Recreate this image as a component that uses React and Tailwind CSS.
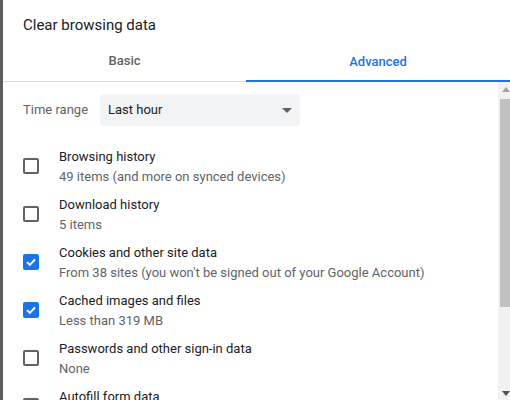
import React from "react";

const items = [
  { title: "Browsing history", sub: "49 items (and more on synced devices)", checked: false },
  { title: "Download history", sub: "5 items", checked: false },
  { title: "Cookies and other site data", sub: "From 38 sites (you won't be signed out of your Google Account)", checked: true },
  { title: "Cached images and files", sub: "Less than 319 MB", checked: true },
  { title: "Passwords and other sign-in data", sub: "None", checked: false },
  { title: "Autofill form data", sub: "", checked: false },
];

function Checkbox({ checked }) {
  if (checked) {
    return (
      <div className="w-4 h-4 rounded-[2px] bg-[#1a73e8] flex items-center justify-center shrink-0">
        <svg width="12" height="12" viewBox="0 0 12 12">
          <path d="M2 6.2 L4.8 9 L10 3.5" fill="none" stroke="white" strokeWidth="1.9" />
        </svg>
      </div>
    );
  }
  return <div className="w-4 h-4 rounded-[2px] border-2 border-[#5f6368] shrink-0" />;
}

export default function App() {
  return (
    <div className="w-[510px] h-[400px] flex overflow-hidden bg-white" style={{ fontFamily: "Roboto, 'Noto Sans', sans-serif" }}>
      <div className="w-[3px] h-full bg-[#5c5c5c] shrink-0" />
      <div className="flex-1 flex flex-col bg-white min-w-0">
        <div className="h-[40px] pl-[20px] pt-[15px] text-[15px] leading-[20px] text-[#202124] shrink-0">Clear browsing data</div>
        <div className="flex h-[42px] border-b border-[#dadce0] shrink-0">
          <div className="w-[243px] flex items-center justify-center text-[13px] font-medium text-[#5f6368] pt-[1px]">Basic</div>
          <div className="flex-1 flex items-center justify-center text-[13px] font-medium text-[#1a73e8] border-b-2 border-[#1a73e8] mb-[-1px] pt-[3px]">Advanced</div>
        </div>
        <div className="flex flex-1 min-h-0">
          <div className="flex-1 pl-[20px] pt-[12px] overflow-hidden">
            <div className="flex items-center h-[32px]">
              <span className="text-[13px] text-[#5f6368] w-[77px]">Time range</span>
              <div className="w-[200px] h-[32px] rounded-[4px] bg-[#f1f3f4] flex items-center justify-between pl-[8px] pr-[8px]">
                <span className="text-[13px] text-[#202124]">Last hour</span>
                <svg width="10" height="5" viewBox="0 0 10 5"><path d="M0 0 L10 0 L5 5 Z" fill="#5f6368" /></svg>
              </div>
            </div>
            <div className="mt-[16px] flex flex-col">
              {items.map((it) => (
                <div key={it.title} className="h-[48px] flex items-center shrink-0">
                  <Checkbox checked={it.checked} />
                  <div className="ml-[20px] flex flex-col self-start pt-[5px]">
                    <span className="text-[13px] leading-[20px] text-[#202124] whitespace-nowrap">{it.title}</span>
                    <span className="text-[13px] leading-[20px] text-[#5f6368] whitespace-nowrap">{it.sub}</span>
                  </div>
                </div>
              ))}
            </div>
          </div>
          <div className="w-[12px] bg-[#f1f1f1] flex flex-col items-center shrink-0 pt-[4px]">
            <svg width="8" height="5" viewBox="0 0 8 5" className="ml-[4px] mt-[1px]"><path d="M0 5 L8 5 L4 0 Z" fill="#a3a3a3" /></svg>
            <div className="w-[10px] ml-[2px] mt-[7px] h-[208px] bg-[#c1c1c1]" />
            <div className="flex-1" />
            <svg width="8" height="5" viewBox="0 0 8 5" className="ml-[4px] mb-[4px]"><path d="M0 0 L8 0 L4 5 Z" fill="#505050" /></svg>
          </div>
        </div>
      </div>
    </div>
  );
}
